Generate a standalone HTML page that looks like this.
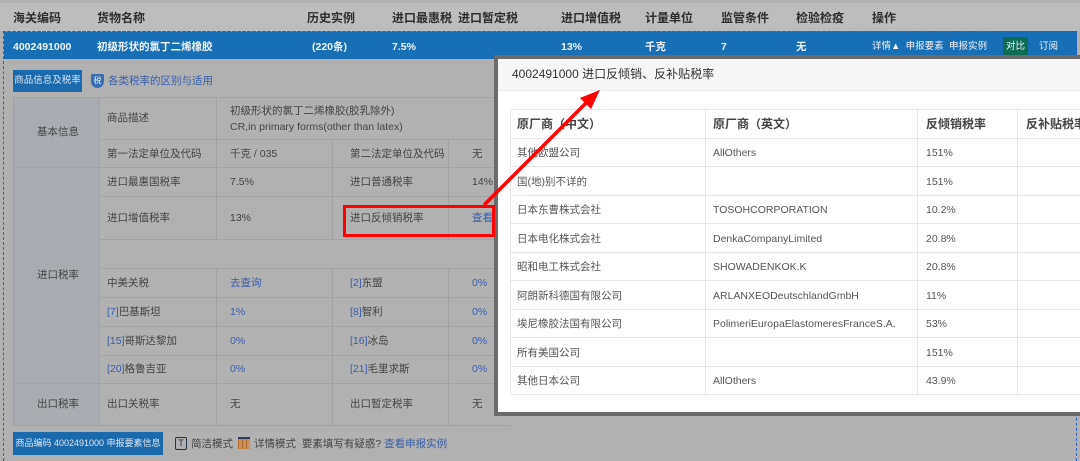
<!DOCTYPE html>
<html><head><meta charset="utf-8"><style>
*{margin:0;padding:0;box-sizing:border-box}
body{width:1080px;height:458px;overflow:hidden;background:#b1b1b1;font-family:"Liberation Sans","Noto Sans CJK SC",sans-serif;position:relative;color:#3a3a3a}
.a{position:absolute;white-space:nowrap;line-height:14px}
.h{font-size:12px;font-weight:bold;color:#2e2e2e;top:11px}
.b{font-size:10.5px;color:#f0f4f8;font-weight:bold;top:40px}
.t{font-size:10.5px;color:#444}
.l{color:#3a5ea8}
.vl{position:absolute;width:1px;background:#a3a3a3}
.hl{position:absolute;height:1px;background:#a3a3a3}
.pr{position:absolute;left:510px;width:600px;height:1px;background:#e6e6e6}
.pv{position:absolute;width:1px;background:#e6e6e6;top:109px;height:286px}
.p{font-size:10.5px;color:#555}
</style></head><body>
<div style="position:absolute;left:0;top:3px;width:1080px;height:28px;background:#bdbdbd"></div>
<div class="a h" style="left:13px">海关编码</div>
<div class="a h" style="left:97px">货物名称</div>
<div class="a h" style="left:307px">历史实例</div>
<div class="a h" style="left:392px">进口最惠税</div>
<div class="a h" style="left:458px">进口暂定税</div>
<div class="a h" style="left:561px">进口增值税</div>
<div class="a h" style="left:645px">计量单位</div>
<div class="a h" style="left:721px">监管条件</div>
<div class="a h" style="left:796px">检验检疫</div>
<div class="a h" style="left:872px">操作</div>
<div style="position:absolute;left:4px;top:31px;width:1073px;height:28px;background:#196fb5;border-top:1px dashed #9fc4ea"></div>
<div style="position:absolute;left:3px;top:31px;width:1074px;height:430px;border:1px dashed #2e62c0;border-bottom:none"></div>
<div class="a b" style="left:13px">4002491000</div>
<div class="a b" style="left:97px">初级形状的氯丁二烯橡胶</div>
<div class="a b" style="left:312px">(220条)</div>
<div class="a b" style="left:392px">7.5%</div>
<div class="a b" style="left:561px">13%</div>
<div class="a b" style="left:645px">千克</div>
<div class="a b" style="left:721px">7</div>
<div class="a b" style="left:796px">无</div>
<div class="a b" style="left:872px;font-size:9.5px;font-weight:normal">详情▲ &nbsp;申报要素 &nbsp;申报实例</div>
<div class="a" style="left:1003px;top:37px;width:25px;height:19px;background:#0d6d56"></div>
<div class="a b" style="left:1006px;font-size:9.5px;font-weight:normal">对比</div>
<div class="a b" style="left:1039px;font-size:9.5px;font-weight:normal">订阅</div>
<div class="a" style="left:13px;top:70px;width:69px;height:22px;background:#1b6aac;color:#dbe6f0;font-size:9.5px;line-height:22px;text-align:center">商品信息及税率</div>
<div class="a" style="left:91px;top:74px;width:13px;height:14px;background:#3a6bb0;border-radius:2px 2px 7px 7px;color:#dfe;font-size:8px;text-align:center;line-height:13px">税</div>
<div class="a t l" style="left:108px;top:74px">各类税率的区别与适用</div>
<div style="position:absolute;left:13px;top:97px;width:86px;height:328px;background:#a8abb0"></div>
<div class="hl" style="left:13px;top:97px;width:1067px"></div>
<div class="hl" style="left:99px;top:139px;width:400px"></div>
<div class="hl" style="left:13px;top:167px;width:490px"></div>
<div class="hl" style="left:99px;top:196px;width:400px"></div>
<div class="hl" style="left:99px;top:239px;width:400px"></div>
<div class="hl" style="left:99px;top:268px;width:400px"></div>
<div class="hl" style="left:99px;top:297px;width:400px"></div>
<div class="hl" style="left:99px;top:326px;width:400px"></div>
<div class="hl" style="left:99px;top:355px;width:400px"></div>
<div class="hl" style="left:13px;top:383px;width:490px"></div>
<div class="hl" style="left:13px;top:425px;width:497px"></div>
<div class="vl" style="left:13px;top:97px;height:328px"></div>
<div class="vl" style="left:99px;top:97px;height:328px"></div>
<div class="vl" style="left:216px;top:97px;height:142px"></div>
<div class="vl" style="left:216px;top:268px;height:157px"></div>
<div class="vl" style="left:332px;top:139px;height:100px"></div>
<div class="vl" style="left:332px;top:268px;height:157px"></div>
<div class="vl" style="left:448px;top:139px;height:100px"></div>
<div class="vl" style="left:448px;top:268px;height:157px"></div>
<div class="a t" style="left:37px;top:125px">基本信息</div>
<div class="a t" style="left:37px;top:268px">进口税率</div>
<div class="a t" style="left:37px;top:397px">出口税率</div>
<div class="a t" style="left:107px;top:111px">商品描述</div>
<div class="a t" style="left:230px;top:103px;line-height:16px">初级形状的氯丁二烯橡胶(胶乳除外)<br>CR,in primary forms(other than latex)</div>
<div class="a t" style="left:107px;top:147px">第一法定单位及代码</div>
<div class="a t" style="left:230px;top:147px">千克 / 035</div>
<div class="a t" style="left:350px;top:147px">第二法定单位及代码</div>
<div class="a t" style="left:472px;top:147px">无</div>
<div class="a t" style="left:107px;top:175px">进口最惠国税率</div>
<div class="a t" style="left:230px;top:175px">7.5%</div>
<div class="a t" style="left:350px;top:175px">进口普通税率</div>
<div class="a t" style="left:472px;top:175px">14%</div>
<div class="a t" style="left:107px;top:211px">进口增值税率</div>
<div class="a t" style="left:230px;top:211px">13%</div>
<div class="a t" style="left:350px;top:211px">进口反倾销税率</div>
<div class="a t l" style="left:472px;top:211px">查看</div>
<div class="a t" style="left:107px;top:276px">中美关税</div>
<div class="a t l" style="left:230px;top:276px">去查询</div>
<div class="a t" style="left:350px;top:276px"><span class="l">[2]</span>东盟</div>
<div class="a t l" style="left:472px;top:276px">0%</div>
<div class="a t" style="left:107px;top:305px"><span class="l">[7]</span>巴基斯坦</div>
<div class="a t l" style="left:230px;top:305px">1%</div>
<div class="a t" style="left:350px;top:305px"><span class="l">[8]</span>智利</div>
<div class="a t l" style="left:472px;top:305px">0%</div>
<div class="a t" style="left:107px;top:334px"><span class="l">[15]</span>哥斯达黎加</div>
<div class="a t l" style="left:230px;top:334px">0%</div>
<div class="a t" style="left:350px;top:334px"><span class="l">[16]</span>冰岛</div>
<div class="a t l" style="left:472px;top:334px">0%</div>
<div class="a t" style="left:107px;top:362px"><span class="l">[20]</span>格鲁吉亚</div>
<div class="a t l" style="left:230px;top:362px">0%</div>
<div class="a t" style="left:350px;top:362px"><span class="l">[21]</span>毛里求斯</div>
<div class="a t l" style="left:472px;top:362px">0%</div>
<div class="a t" style="left:107px;top:397px">出口关税率</div>
<div class="a t" style="left:230px;top:397px">无</div>
<div class="a t" style="left:350px;top:397px">出口暂定税率</div>
<div class="a t" style="left:472px;top:397px">无</div>
<div class="a" style="left:13px;top:432px;width:150px;height:23px;background:#1b6aac;color:#dbe6f0;font-size:9px;line-height:23px;text-align:center">商品编码 4002491000 申报要素信息</div>
<div class="a" style="left:175px;top:437px;width:12px;height:13px;border:1px solid #234;border-radius:2px;font-size:9px;line-height:11px;text-align:center;color:#234">T</div>
<div class="a t" style="left:191px;top:437px">简洁模式</div>
<div class="a" style="left:238px;top:437px;width:12px;height:12px;background:repeating-linear-gradient(90deg,#b06a2a 0 1px,#c99060 1px 4px);border-top:2px solid #2a3a6a"></div>
<div class="a t" style="left:254px;top:437px">详情模式 &nbsp;要素填写有疑惑? <span class="l">查看申报实例</span></div>
<div style="position:absolute;left:494px;top:55px;width:600px;height:361px;background:#fff;border:4px solid #6b6b6b;border-right:none"></div>
<div style="position:absolute;left:498px;top:59px;width:590px;height:32px;background:#f7f7f7;border-bottom:1px solid #ececec"></div>
<div class="a" style="left:512px;top:67px;font-size:12px;color:#333">4002491000 进口反倾销、反补贴税率</div>
<div class="pr" style="top:109px"></div>
<div class="pr" style="top:138px"></div>
<div class="pr" style="top:166px"></div>
<div class="pr" style="top:195px"></div>
<div class="pr" style="top:223px"></div>
<div class="pr" style="top:252px"></div>
<div class="pr" style="top:280px"></div>
<div class="pr" style="top:309px"></div>
<div class="pr" style="top:337px"></div>
<div class="pr" style="top:366px"></div>
<div class="pr" style="top:394px"></div>
<div class="pv" style="left:510px"></div>
<div class="pv" style="left:705px"></div>
<div class="pv" style="left:917px"></div>
<div class="pv" style="left:1017px"></div>
<div class="a" style="left:517px;top:117px;font-size:12px;font-weight:bold;color:#444">原厂商（中文）</div>
<div class="a" style="left:713px;top:117px;font-size:12px;font-weight:bold;color:#444">原厂商（英文）</div>
<div class="a" style="left:926px;top:117px;font-size:12px;font-weight:bold;color:#444">反倾销税率</div>
<div class="a" style="left:1026px;top:117px;font-size:12px;font-weight:bold;color:#444">反补贴税率</div>
<div class="a p" style="left:517px;top:146px">其他欧盟公司</div><div class="a p" style="left:713px;top:146px">AllOthers</div><div class="a p" style="left:926px;top:146px">151%</div>
<div class="a p" style="left:517px;top:175px">国(地)别不详的</div><div class="a p" style="left:926px;top:175px">151%</div>
<div class="a p" style="left:517px;top:203px">日本东曹株式会社</div><div class="a p" style="left:713px;top:203px">TOSOHCORPORATION</div><div class="a p" style="left:926px;top:203px">10.2%</div>
<div class="a p" style="left:517px;top:232px">日本电化株式会社</div><div class="a p" style="left:713px;top:232px">DenkaCompanyLimited</div><div class="a p" style="left:926px;top:232px">20.8%</div>
<div class="a p" style="left:517px;top:260px">昭和电工株式会社</div><div class="a p" style="left:713px;top:260px">SHOWADENKOK.K</div><div class="a p" style="left:926px;top:260px">20.8%</div>
<div class="a p" style="left:517px;top:289px">阿朗新科德国有限公司</div><div class="a p" style="left:713px;top:289px">ARLANXEODeutschlandGmbH</div><div class="a p" style="left:926px;top:289px">11%</div>
<div class="a p" style="left:517px;top:317px">埃尼橡胶法国有限公司</div><div class="a p" style="left:713px;top:317px">PolimeriEuropaElastomeresFranceS.A.</div><div class="a p" style="left:926px;top:317px">53%</div>
<div class="a p" style="left:517px;top:346px">所有美国公司</div><div class="a p" style="left:926px;top:346px">151%</div>
<div class="a p" style="left:517px;top:374px">其他日本公司</div><div class="a p" style="left:713px;top:374px">AllOthers</div><div class="a p" style="left:926px;top:374px">43.9%</div>
<div style="position:absolute;left:343px;top:205px;width:152px;height:32px;border:3px solid #f00"></div>
<svg style="position:absolute;left:0;top:0" width="1080" height="458"><line x1="484" y1="205" x2="588" y2="101" stroke="#f00" stroke-width="3.5"/><polygon points="600,90 580,98 591,109" fill="#f00"/></svg>
</body></html>
